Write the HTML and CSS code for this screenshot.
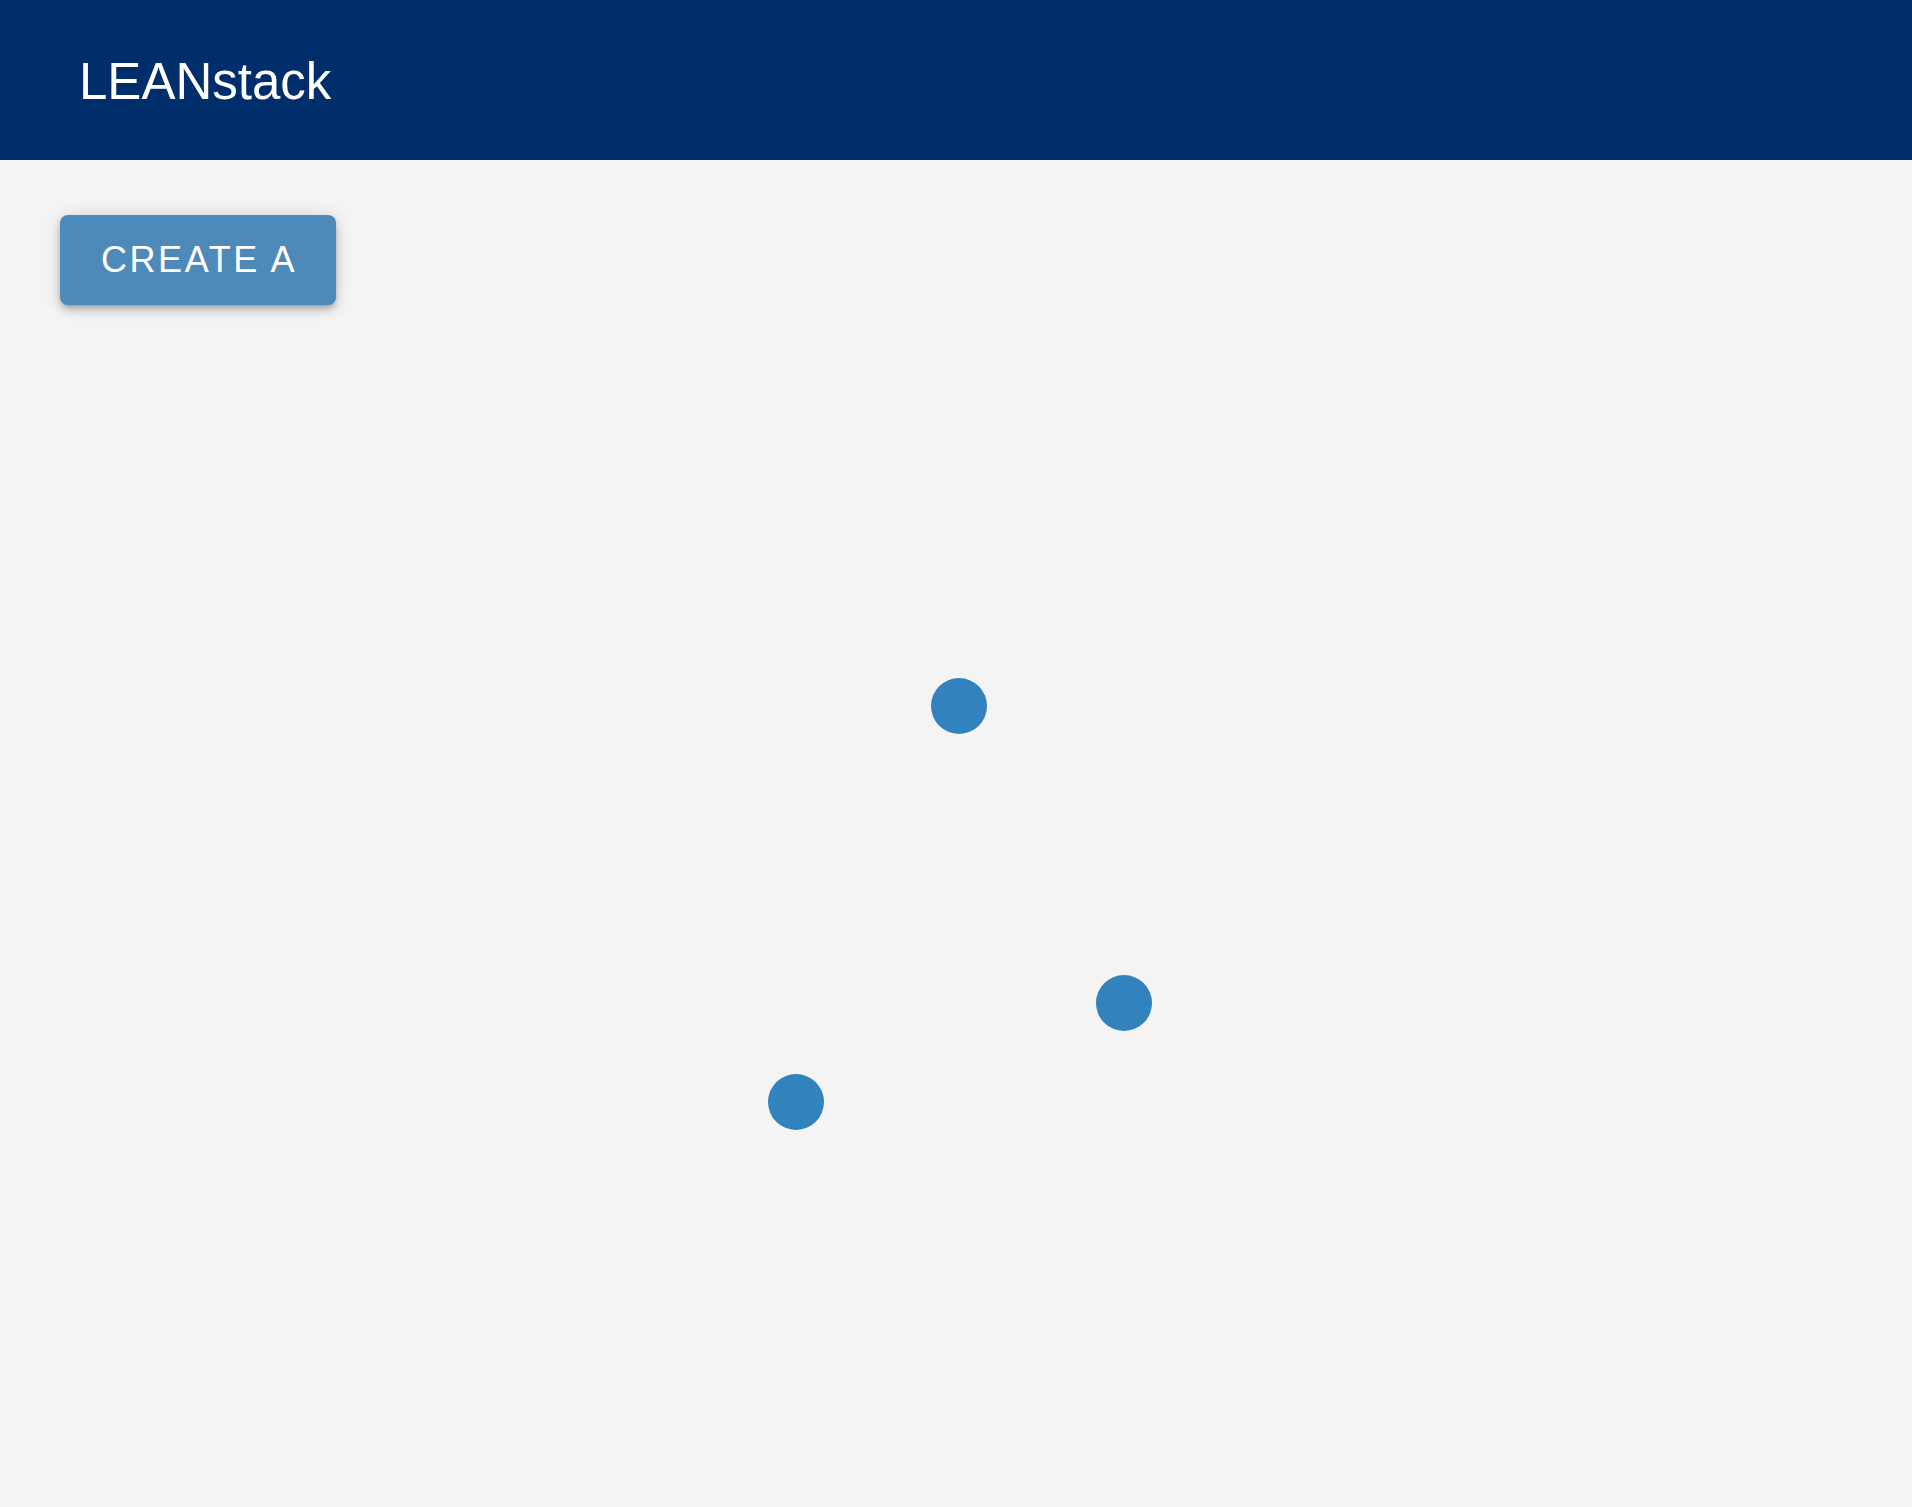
FILE: index.html
```html
<!DOCTYPE html>
<html lang="en">
<head>
<meta charset="utf-8">
<title>LEANstack</title>
<link rel="stylesheet" href="styles.css">
</head>
<body>
<header class="app-bar">
  <h1 class="brand">LEANstack</h1>
</header>
<main class="canvas-area">
  <div class="toolbar">
    <button class="create-btn" type="button">CREATE A</button>
  </div>
  <svg class="graph" width="1912" height="1507" viewBox="0 0 1912 1507" aria-hidden="true">
    <circle class="node" cx="959" cy="706" r="28"></circle>
    <circle class="node" cx="1124" cy="1003" r="28"></circle>
    <circle class="node" cx="796" cy="1102" r="28"></circle>
  </svg>
</main>
</body>
</html>
```
FILE: styles.css
```css
html, body {
  margin: 0;
  padding: 0;
  height: 100%;
  background: #f4f4f4;
  font-family: "Liberation Sans", Arial, sans-serif;
  overflow: hidden;
}
.app-bar {
  height: 160px;
  background: #002e6b;
  display: flex;
  align-items: center;
  padding-left: 79px;
  box-sizing: border-box;
}
.brand {
  margin: 0;
  color: #ffffff;
  font-weight: 400;
  font-size: 51px;
  line-height: 1;
  padding-top: 2px;
}
.canvas-area {
  position: relative;
  height: calc(100% - 160px);
}
.toolbar {
  position: relative;
  z-index: 1;
  padding: 55px 0 0 60px;
}
.create-btn {
  width: 276px;
  height: 90px;
  border: none;
  border-radius: 8px;
  background: #4d8aba;
  color: #ffffff;
  font-family: "Liberation Sans", Arial, sans-serif;
  font-size: 36px;
  letter-spacing: 2.6px;
  padding: 0 0 0 2px;
  box-shadow: 0 3px 5px -1px rgba(0,0,0,0.2), 0 6px 10px 0 rgba(0,0,0,0.14), 0 1px 18px 0 rgba(0,0,0,0.12);
  cursor: pointer;
}
.graph {
  position: absolute;
  left: 0;
  top: -160px;
}
.node {
  fill: #3182bd;
}
```
